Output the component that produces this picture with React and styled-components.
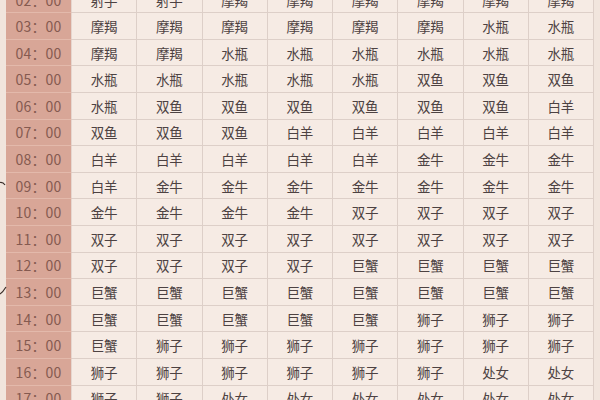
import React from "react";
import styled, { createGlobalStyle } from "styled-components";

const Global = createGlobalStyle`
  html, body { margin: 0; padding: 0; background: #f2e6de; overflow: hidden; }
  body { font-family: "Noto Sans CJK SC", "Noto Sans", sans-serif; }
`;

const Page = styled.div`
  position: relative;
  width: 600px;
  height: 400px;
  overflow: hidden;
  background: #f1e5dd;
`;

const Table = styled.div`
  display: grid;
  grid-template-columns: 66px repeat(8, 65.25px);
  grid-auto-rows: 26.6px;
  margin-top: -13.3px;
  margin-left: 6px;
  width: max-content;
`;

const TimeCell = styled.div`
  background: #d8a697;
  color: #855a50;
  font-size: 14px;
  display: flex;
  align-items: center;
  justify-content: center;
  border-bottom: 1px solid #e3b9ab;
  border-right: 1px solid #e6d6cf;
  box-sizing: border-box;
  letter-spacing: 0.2px;
`;

const Cell = styled.div`
  background: #f6ebe4;
  color: #4d4242;
  font-size: 13.5px;
  display: flex;
  align-items: center;
  justify-content: center;
  border-bottom: 1px solid #ddcfc8;
  border-right: 1px solid #ddcfc8;
  box-sizing: border-box;
`;

const Marks = styled.svg`
  position: absolute;
  left: 0;
  top: 0;
  pointer-events: none;
`;

const rows = [
  ["02：00", "射手 射手 摩羯 摩羯 摩羯 摩羯 摩羯 摩羯"],
  ["03：00", "摩羯 摩羯 摩羯 摩羯 摩羯 摩羯 水瓶 水瓶"],
  ["04：00", "摩羯 摩羯 水瓶 水瓶 水瓶 水瓶 水瓶 水瓶"],
  ["05：00", "水瓶 水瓶 水瓶 水瓶 水瓶 双鱼 双鱼 双鱼"],
  ["06：00", "水瓶 双鱼 双鱼 双鱼 双鱼 双鱼 双鱼 白羊"],
  ["07：00", "双鱼 双鱼 双鱼 白羊 白羊 白羊 白羊 白羊"],
  ["08：00", "白羊 白羊 白羊 白羊 白羊 金牛 金牛 金牛"],
  ["09：00", "白羊 金牛 金牛 金牛 金牛 金牛 金牛 金牛"],
  ["10：00", "金牛 金牛 金牛 金牛 双子 双子 双子 双子"],
  ["11：00", "双子 双子 双子 双子 双子 双子 双子 双子"],
  ["12：00", "双子 双子 双子 双子 巨蟹 巨蟹 巨蟹 巨蟹"],
  ["13：00", "巨蟹 巨蟹 巨蟹 巨蟹 巨蟹 巨蟹 巨蟹 巨蟹"],
  ["14：00", "巨蟹 巨蟹 巨蟹 巨蟹 巨蟹 狮子 狮子 狮子"],
  ["15：00", "巨蟹 狮子 狮子 狮子 狮子 狮子 狮子 狮子"],
  ["16：00", "狮子 狮子 狮子 狮子 狮子 狮子 处女 处女"],
  ["17：00", "狮子 狮子 处女 处女 处女 处女 处女 处女"],
];

export default function App() {
  return (
    <Page>
      <Global />
      <Table>
        {rows.map(([t, signs]) => (
          <React.Fragment key={t}>
            <TimeCell>{t}</TimeCell>
            {signs.split(" ").map((s, i) => (
              <Cell key={i}>{s}</Cell>
            ))}
          </React.Fragment>
        ))}
      </Table>
      <Marks width="10" height="400" viewBox="0 0 10 400">
        <path d="M0 182.5 Q3 182 5 185" stroke="#3a2e2a" strokeWidth="1.2" fill="none" />
        <path d="M0 294 Q3 292 6 287" stroke="#3a2e2a" strokeWidth="1.2" fill="none" />
      </Marks>
    </Page>
  );
}
